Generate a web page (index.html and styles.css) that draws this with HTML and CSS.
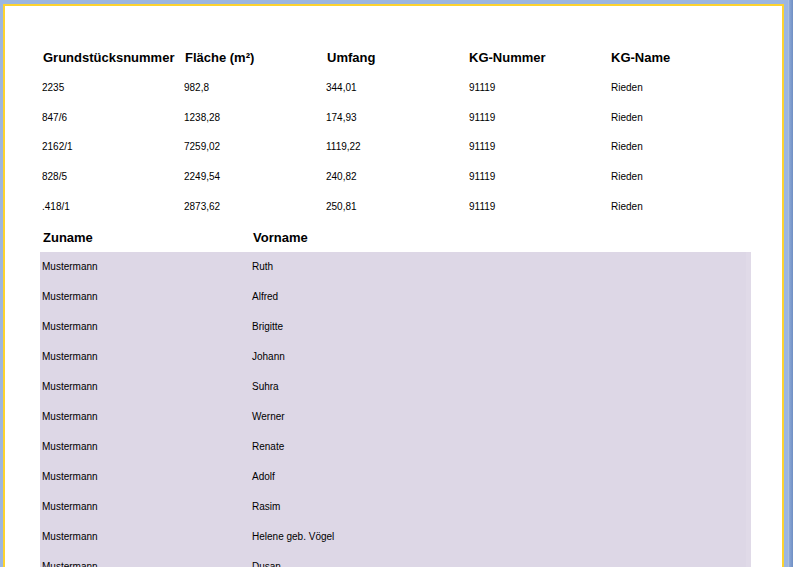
FILE: index.html
```html
<!DOCTYPE html>
<html lang="de">
<head>
<meta charset="utf-8">
<title>Grundstücke</title>
<link rel="stylesheet" href="styles.css">
</head>
<body>
<div class="page">
  <div class="parcels">
    <div class="row head">
      <div>Grundstücksnummer</div><div>Fläche (m²)</div><div>Umfang</div><div>KG-Nummer</div><div>KG-Name</div>
    </div>
    <div class="row"><div>2235</div><div>982,8</div><div>344,01</div><div>91119</div><div>Rieden</div></div>
    <div class="row"><div>847/6</div><div>1238,28</div><div>174,93</div><div>91119</div><div>Rieden</div></div>
    <div class="row"><div>2162/1</div><div>7259,02</div><div>1119,22</div><div>91119</div><div>Rieden</div></div>
    <div class="row"><div>828/5</div><div>2249,54</div><div>240,82</div><div>91119</div><div>Rieden</div></div>
    <div class="row"><div>.418/1</div><div>2873,62</div><div>250,81</div><div>91119</div><div>Rieden</div></div>
  </div>
  <div class="owners">
    <div class="orow head"><div>Zuname</div><div>Vorname</div></div>
    <div class="panel">
      <div class="orow"><div>Mustermann</div><div>Ruth</div></div>
      <div class="orow"><div>Mustermann</div><div>Alfred</div></div>
      <div class="orow"><div>Mustermann</div><div>Brigitte</div></div>
      <div class="orow"><div>Mustermann</div><div>Johann</div></div>
      <div class="orow"><div>Mustermann</div><div>Suhra</div></div>
      <div class="orow"><div>Mustermann</div><div>Werner</div></div>
      <div class="orow"><div>Mustermann</div><div>Renate</div></div>
      <div class="orow"><div>Mustermann</div><div>Adolf</div></div>
      <div class="orow"><div>Mustermann</div><div>Rasim</div></div>
      <div class="orow"><div>Mustermann</div><div>Helene geb. Vögel</div></div>
      <div class="orow"><div>Mustermann</div><div>Dusan</div></div>
    </div>
  </div>
</div>
</body>
</html>
```

FILE: styles.css
```css
html, body {
  margin: 0;
  padding: 0;
  height: 100%;
  overflow: hidden;
}
body {
  background: linear-gradient(to right, #9cb6e0 0, #9cb6e0 788px, #c9d3e3 788px, #8eaad8 789px, #6f8fc4 793px);
  padding: 4px 0 0 3px;
  box-sizing: border-box;
  font-family: "Liberation Sans", Arial, sans-serif;
  color: #000;
}
.page {
  width: 781px;
  height: 600px;
  background: #fff;
  border: 2px solid #fdd32f;
  border-bottom: none;
  padding: 36px 0 0 37px;
  box-sizing: border-box;
}
.parcels {
  display: flex;
  flex-direction: column;
}
.row {
  display: grid;
  grid-template-columns: 142px 142px 143px 142px 142px;
  height: 29.7px;
  align-items: center;
  font-size: 10px;
}
.head {
  font-size: 13px;
  font-weight: bold;
}
.head > div {
  padding-left: 1px;
}
.parcels .row.head {
  height: 30.5px;
  grid-template-columns: 142px 142px 142px 142px 142px;
}
.owners {
  margin-left: -2px;
  width: 711px;
}
.orow {
  display: grid;
  grid-template-columns: 210px 1fr;
  height: 30px;
  align-items: center;
  font-size: 10px;
  padding-left: 2px;
}
.orow.head {
  height: 31px;
  box-sizing: border-box;
  font-size: 13px;
  padding-top: 2px;
}
.panel {
  background: #ddd7e6;
  border-right: 5px solid #e0dae8;
}
```
